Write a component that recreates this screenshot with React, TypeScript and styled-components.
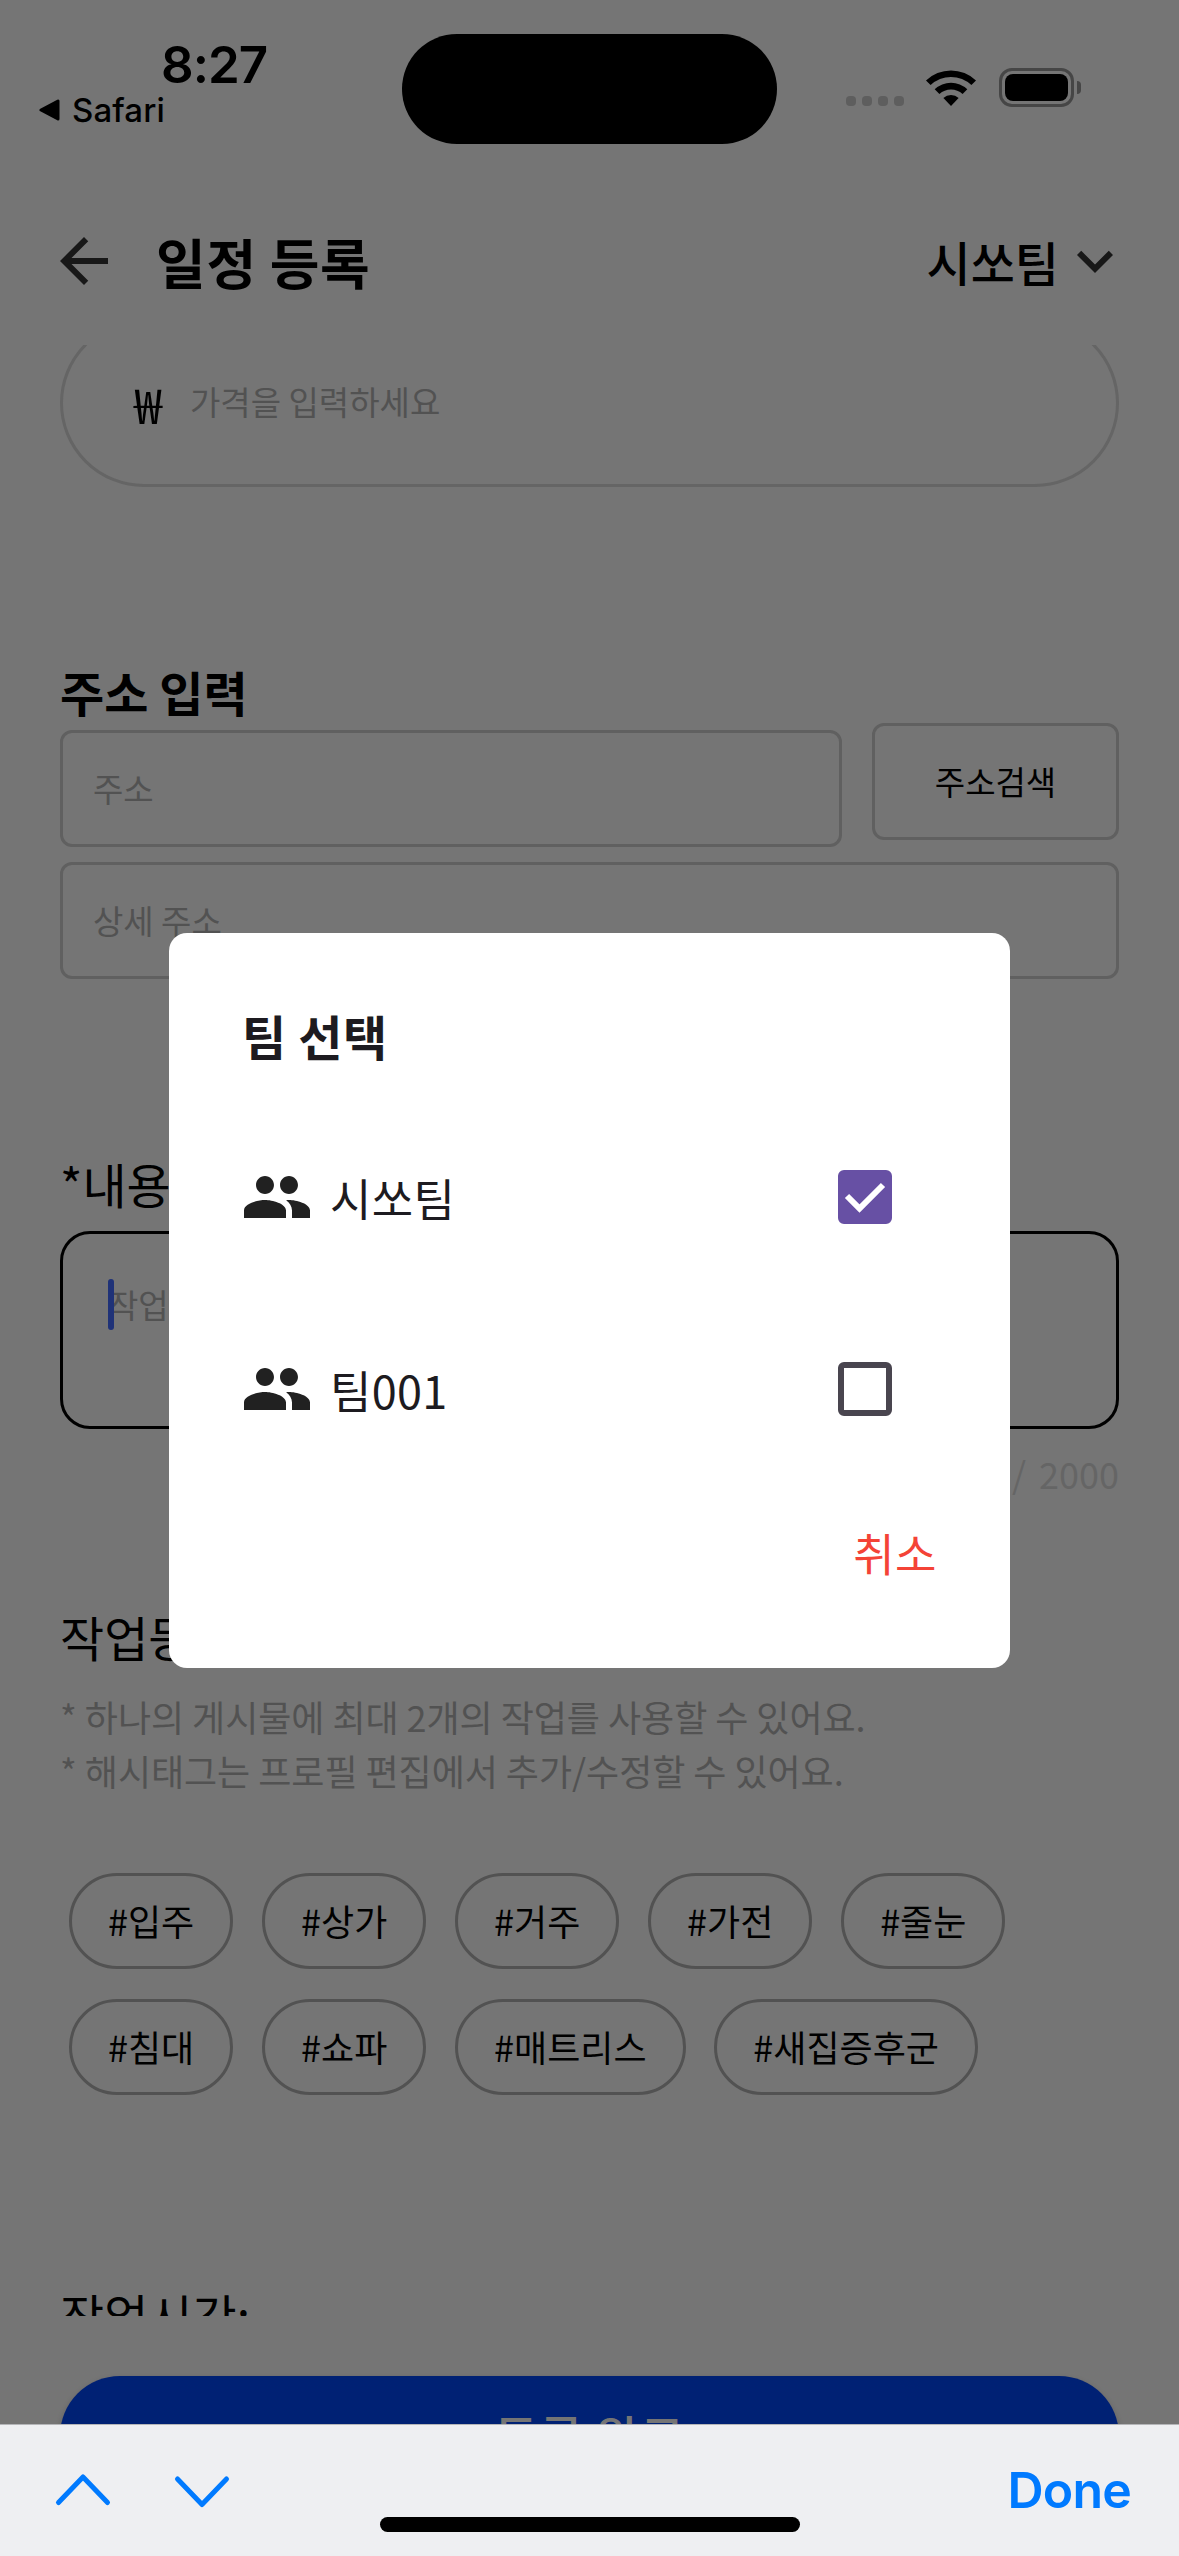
import React from 'react';
import styled, { createGlobalStyle } from 'styled-components';

const ink = '#000000';
const scrim = '#757575';
const hint = '#525252';

const GlobalStyle = createGlobalStyle`
  *, *::before, *::after { box-sizing: border-box; }
  body { margin: 0; background: ${scrim}; }
  button { font: inherit; margin: 0; padding: 0; border: 0; background: none; color: inherit; }
`;

const Screen = styled.main`
  position: relative;
  display: flex;
  flex-direction: column;
  width: 1179px;
  height: 2556px;
  overflow: hidden;
  background: ${scrim};
  color: ${ink};
  font-family: 'Noto Sans CJK KR', 'Noto Sans', sans-serif;
  white-space: nowrap;
`;

/* Status bar */
const StatusBar = styled.div`
  display: grid;
  grid-template-columns: 402px 375px 1fr;
  flex: none;
  height: 177px;
  font-family: Inter, 'Liberation Sans', sans-serif;
`;

const ClockArea = styled.div`
  display: flex;
  flex-direction: column;
  padding: 39px 0 0 38px;
`;

const Clock = styled.div`
  padding-left: 123px;
  font-size: 51px;
  font-weight: 600;
  line-height: 52px;
  letter-spacing: -1px;
`;

const BackToApp = styled.div`
  display: flex;
  align-items: center;
  gap: 12px;
  font-size: 33px;
  font-weight: 500;
  line-height: 38px;
  letter-spacing: 0.1px;
`;

const Island = styled.div`
  height: 110px;
  margin-top: 34px;
  border-radius: 55px;
  background: ${ink};
`;

const StatusIcons = styled.div`
  display: flex;
  align-items: flex-start;
  padding: 68px 0 0 69px;
`;

const Cellular = styled.div`
  display: flex;
  gap: 6px;
  margin-top: 28px;
`;

const CellDot = styled.i`
  width: 10px;
  height: 10px;
  border-radius: 4px;
  background: #5e5e5e;
`;

const Wifi = styled.svg`
  width: 52px;
  height: 38px;
  margin-left: 21px;
`;

const Battery = styled.div`
  display: flex;
  align-items: center;
  gap: 3px;
  margin-left: 22px;
`;

const BatteryShell = styled.div`
  width: 75px;
  height: 39px;
  padding: 3px;
  border: 3px solid #464646;
  border-radius: 13px;
`;

const BatteryCharge = styled.div`
  height: 100%;
  border-radius: 8px;
  background: ${ink};
`;

const BatteryTip = styled.div`
  width: 4px;
  height: 13px;
  border-radius: 0 4px 4px 0;
  background: #464646;
`;

/* App header */
const AppHeader = styled.header`
  display: flex;
  align-items: center;
  flex: none;
  height: 168px;
  padding: 0 48px;
`;

const Glyph = styled.svg`
  display: block;
  flex: none;
  width: 72px;
  height: 72px;
`;

const PageTitle = styled.h1`
  flex: 1;
  margin: 1px 0 0 36px;
  font-size: 54px;
  font-weight: 700;
  line-height: 80px;
  letter-spacing: 0.7px;
`;

const TeamPicker = styled.button`
  display: flex;
  align-items: center;
  font-size: 48px;
  font-weight: 500;
  line-height: 70px;
`;

/* Form */
const FormViewport = styled.section`
  flex: none;
  height: 1971px;
  padding: 0 60px;
  overflow: hidden;
`;

const PriceField = styled.div`
  display: flex;
  align-items: center;
  height: 168px;
  margin-top: -26px;
  padding: 0 69px 4px;
  border: 3px solid #656565;
  border-radius: 84px;
`;

const Won = styled.span`
  display: flex;
  justify-content: center;
  width: 34px;
  margin: 3px 25px 0 -1px;
  font-size: 48px;
  transform: scaleX(1.04);
`;

const Hint = styled.span`
  color: ${hint};
  font-size: 33px;
  line-height: 48px;
`;

const SectionLabel = styled.h2<{ $top: number; $weight?: number }>`
  margin: ${(p) => p.$top}px 0 0;
  font-size: 48px;
  font-weight: ${(p) => p.$weight ?? 400};
  line-height: 64px;
`;

const AddressRow = styled.div`
  display: flex;
  align-items: flex-start;
  gap: 30px;
`;

const OutlinedField = styled.div<{ $top: number }>`
  display: flex;
  flex: 1;
  align-items: center;
  height: 117px;
  margin-top: ${(p) => p.$top}px;
  padding: 0 30px 1px;
  border: 3px solid #606060;
  border-radius: 12px;
`;

const SearchButton = styled.button`
  width: 247px;
  height: 117px;
  padding-bottom: 1px;
  border: 3px solid #606060;
  border-radius: 12px;
  font-size: 33px;
  line-height: 48px;
`;

const MemoField = styled.div`
  display: flex;
  align-items: flex-start;
  height: 198px;
  margin-top: 16px;
  padding: 45px 45px;
  border: 3px solid ${ink};
  border-radius: 30px;
`;

const Caret = styled.i`
  width: 6px;
  height: 51px;
  margin-right: -6px;
  border-radius: 3px;
  background: #1f3278;
  z-index: 1;
`;

const MemoHint = styled(Hint)`
  padding-top: 1px;
`;

const Counter = styled.div`
  margin-top: 18px;
  color: #656565;
  font-size: 36px;
  line-height: 52px;
  text-align: right;
  word-spacing: 5px;
`;

const Notes = styled.ul`
  margin: 21px 0 0;
  padding: 0;
  list-style: none;
  color: ${hint};
  font-size: 36px;
  line-height: 54px;
  letter-spacing: -0.04px;
`;

const Tags = styled.div`
  display: flex;
  flex-wrap: wrap;
  gap: 30px 28.8px;
  margin-top: 76px;
  padding: 0 9px;
`;

const Tag = styled.span`
  height: 96px;
  padding: 0 36px;
  border: 3px solid ${hint};
  border-radius: 48px;
  font-size: 36px;
  line-height: 89px;
`;

/* Footer */
const Footer = styled.footer`
  flex: none;
  height: 108px;
  padding: 60px 60px 0;
  overflow: hidden;
`;

const SubmitButton = styled.button`
  width: 100%;
  height: 120px;
  padding-bottom: 2px;
  border-radius: 60px;
  background: #002174;
  box-shadow: 0 3px 6px rgba(0, 0, 0, 0.2);
  color: ${scrim};
  font-size: 48px;
  font-weight: 500;
  line-height: 70px;
  letter-spacing: 0.7px;
`;

const KeyboardBar = styled.div`
  position: relative;
  display: flex;
  align-items: flex-start;
  flex: none;
  height: 132px;
  padding: 0 48px 0 48px;
  border-top: 1px solid #b4b5b8;
  background: #eeeff2;
  color: #007aff;
`;

const FieldStep = styled.svg`
  width: 70px;
  height: 50px;
  margin: 40px 49px 0 0;
`;

const DoneButton = styled.button`
  margin: 33px 0 0 auto;
  font-family: Inter, 'Liberation Sans', sans-serif;
  font-size: 50px;
  font-weight: 600;
  line-height: 64px;
  letter-spacing: -0.8px;
`;

const HomeIndicator = styled.div`
  position: absolute;
  left: 380px;
  bottom: 24px;
  width: 420px;
  height: 15px;
  border-radius: 8px;
  background: ${ink};
`;

/* Team dialog */
const DialogLayer = styled.div`
  position: absolute;
  inset: 933px 0 auto;
  display: flex;
  justify-content: center;
`;

const Dialog = styled.div`
  display: flex;
  flex-direction: column;
  width: 841px;
  height: 735px;
  padding: 70px 73px 0 72px;
  border-radius: 18px;
  background: #ffffff;
  color: #1d1b20;
`;

const DialogTitle = styled.h3`
  margin: 0 0 58px;
  padding-left: 1px;
  font-size: 48px;
  font-weight: 700;
  line-height: 64px;
  letter-spacing: 0.6px;
`;

const TeamRow = styled.div`
  display: flex;
  align-items: center;
  height: 144px;
  margin-bottom: 48px;
`;

const TeamName = styled.span`
  flex: 1;
  padding: 2px 0 0 17px;
  font-size: 45px;
  line-height: 66px;
  letter-spacing: 0.3px;
`;

const CheckBox = styled.span<{ $checked: boolean }>`
  width: 54px;
  height: 54px;
  margin-right: 45px;
  border: 6px solid ${(p) => (p.$checked ? '#6750a4' : '#49454f')};
  border-radius: 6px;
  background: ${(p) => (p.$checked ? '#6750a4' : 'transparent')};
`;

const Tick = styled.svg`
  display: block;
  width: 42px;
  height: 42px;
`;

const CancelButton = styled.button`
  align-self: flex-end;
  margin-top: 11px;
  color: #f44336;
  font-size: 45px;
  line-height: 66px;
  letter-spacing: 0.5px;
`;

const tags = ['입주', '상가', '거주', '가전', '줄눈', '침대', '쇼파', '매트리스', '새집증후군'];

const teams = [
  { name: '시쏘팀', checked: true },
  { name: '팀001', checked: false },
];

function PeopleIcon() {
  return (
    <Glyph viewBox="0 0 24 24" fill="#212121">
      <path d="M16 11c1.66 0 2.99-1.34 2.99-3S17.66 5 16 5s-3 1.34-3 3 1.34 3 3 3zm-8 0c1.66 0 2.99-1.34 2.99-3S9.66 5 8 5 5 6.34 5 8s1.34 3 3 3zm0 2c-2.33 0-7 1.17-7 3.5V19h14v-2.5c0-2.33-4.67-3.5-7-3.5zm8 0c-.29 0-.62.02-.97.05 1.16.84 1.97 1.97 1.97 3.45V19h6v-2.5c0-2.33-4.67-3.5-7-3.5z" />
    </Glyph>
  );
}

export default function App() {
  return (
    <>
      <GlobalStyle />
      <Screen>
        <StatusBar>
          <ClockArea>
            <Clock>8:27</Clock>
            <BackToApp>
              <svg width="22" height="22" viewBox="0 0 22 22">
                <path d="M3 11 20 2v18z" stroke="#000" strokeWidth="3" strokeLinejoin="round" />
              </svg>
              Safari
            </BackToApp>
          </ClockArea>
          <Island />
          <StatusIcons>
            <Cellular>
              <CellDot />
              <CellDot />
              <CellDot />
              <CellDot />
            </Cellular>
            <Wifi viewBox="0 0 52 38">
              <path d="M1 12.5a36 36 0 0 1 50 0l-4.6 4.6a29.5 29.5 0 0 0-40.8 0z" />
              <path d="M9.7 21.3a23.6 23.6 0 0 1 32.6 0l-4.7 4.7a17 17 0 0 0-23.2 0z" />
              <path d="M18.4 30a11.3 11.3 0 0 1 15.2 0L26 38z" />
            </Wifi>
            <Battery>
              <BatteryShell>
                <BatteryCharge />
              </BatteryShell>
              <BatteryTip />
            </Battery>
          </StatusIcons>
        </StatusBar>

        <AppHeader>
          <Glyph viewBox="0 0 24 24" fill="#181818">
            <path d="M20 11H7.83l5.59-5.59L12 4l-8 8 8 8 1.41-1.41L7.83 13H20v-2z" />
          </Glyph>
          <PageTitle>일정 등록</PageTitle>
          <TeamPicker>
            시쏘팀
            <Glyph viewBox="0 0 24 24" fill="#181818">
              <path d="M16.59 8.59L12 13.17 7.41 8.59 6 10l6 6 6-6z" />
            </Glyph>
          </TeamPicker>
        </AppHeader>

        <FormViewport>
          <PriceField>
            <Won>₩</Won>
            <Hint>가격을 입력하세요</Hint>
          </PriceField>

          <SectionLabel $top={172} $weight={700}>주소 입력</SectionLabel>
          <AddressRow>
            <OutlinedField $top={7}>
              <Hint>주소</Hint>
            </OutlinedField>
            <SearchButton>주소검색</SearchButton>
          </AddressRow>
          <OutlinedField $top={15}>
            <Hint>상세 주소</Hint>
          </OutlinedField>

          <SectionLabel $top={172}>*내용</SectionLabel>
          <MemoField>
            <Caret />
            <MemoHint>작업 내용을 입력하세요</MemoHint>
          </MemoField>
          <Counter>0 / 2000</Counter>

          <SectionLabel $top={105}>작업등록</SectionLabel>
          <Notes>
            <li>* 하나의 게시물에 최대 2개의 작업를 사용할 수 있어요.</li>
            <li>* 해시태그는 프로필 편집에서 추가/수정할 수 있어요.</li>
          </Notes>
          <Tags>
            {tags.map((tag) => (
              <Tag key={tag}>#{tag}</Tag>
            ))}
          </Tags>

          <SectionLabel $top={187}>작업시간:</SectionLabel>
        </FormViewport>

        <Footer>
          <SubmitButton>등록 완료</SubmitButton>
        </Footer>

        <KeyboardBar>
          <FieldStep viewBox="0 0 70 50" fill="none" stroke="#007aff" strokeWidth="5" strokeLinecap="round" strokeLinejoin="round">
            <path d="M10.5 37.5 35 12l24.5 25.5" />
          </FieldStep>
          <FieldStep viewBox="0 0 70 50" fill="none" stroke="#007aff" strokeWidth="5" strokeLinecap="round" strokeLinejoin="round">
            <path d="M10.5 14 35 39.5 59.5 14" />
          </FieldStep>
          <DoneButton>Done</DoneButton>
          <HomeIndicator />
        </KeyboardBar>

        <DialogLayer>
          <Dialog role="dialog">
            <DialogTitle>팀 선택</DialogTitle>
            {teams.map((team) => (
              <TeamRow key={team.name}>
                <PeopleIcon />
                <TeamName>{team.name}</TeamName>
                <CheckBox $checked={team.checked}>
                  {team.checked && (
                    <Tick viewBox="0 0 42 42" fill="none" stroke="#fff" strokeWidth="6">
                      <path d="M3 20 15.5 32.5 39 9" />
                    </Tick>
                  )}
                </CheckBox>
              </TeamRow>
            ))}
            <CancelButton>취소</CancelButton>
          </Dialog>
        </DialogLayer>
      </Screen>
    </>
  );
}
